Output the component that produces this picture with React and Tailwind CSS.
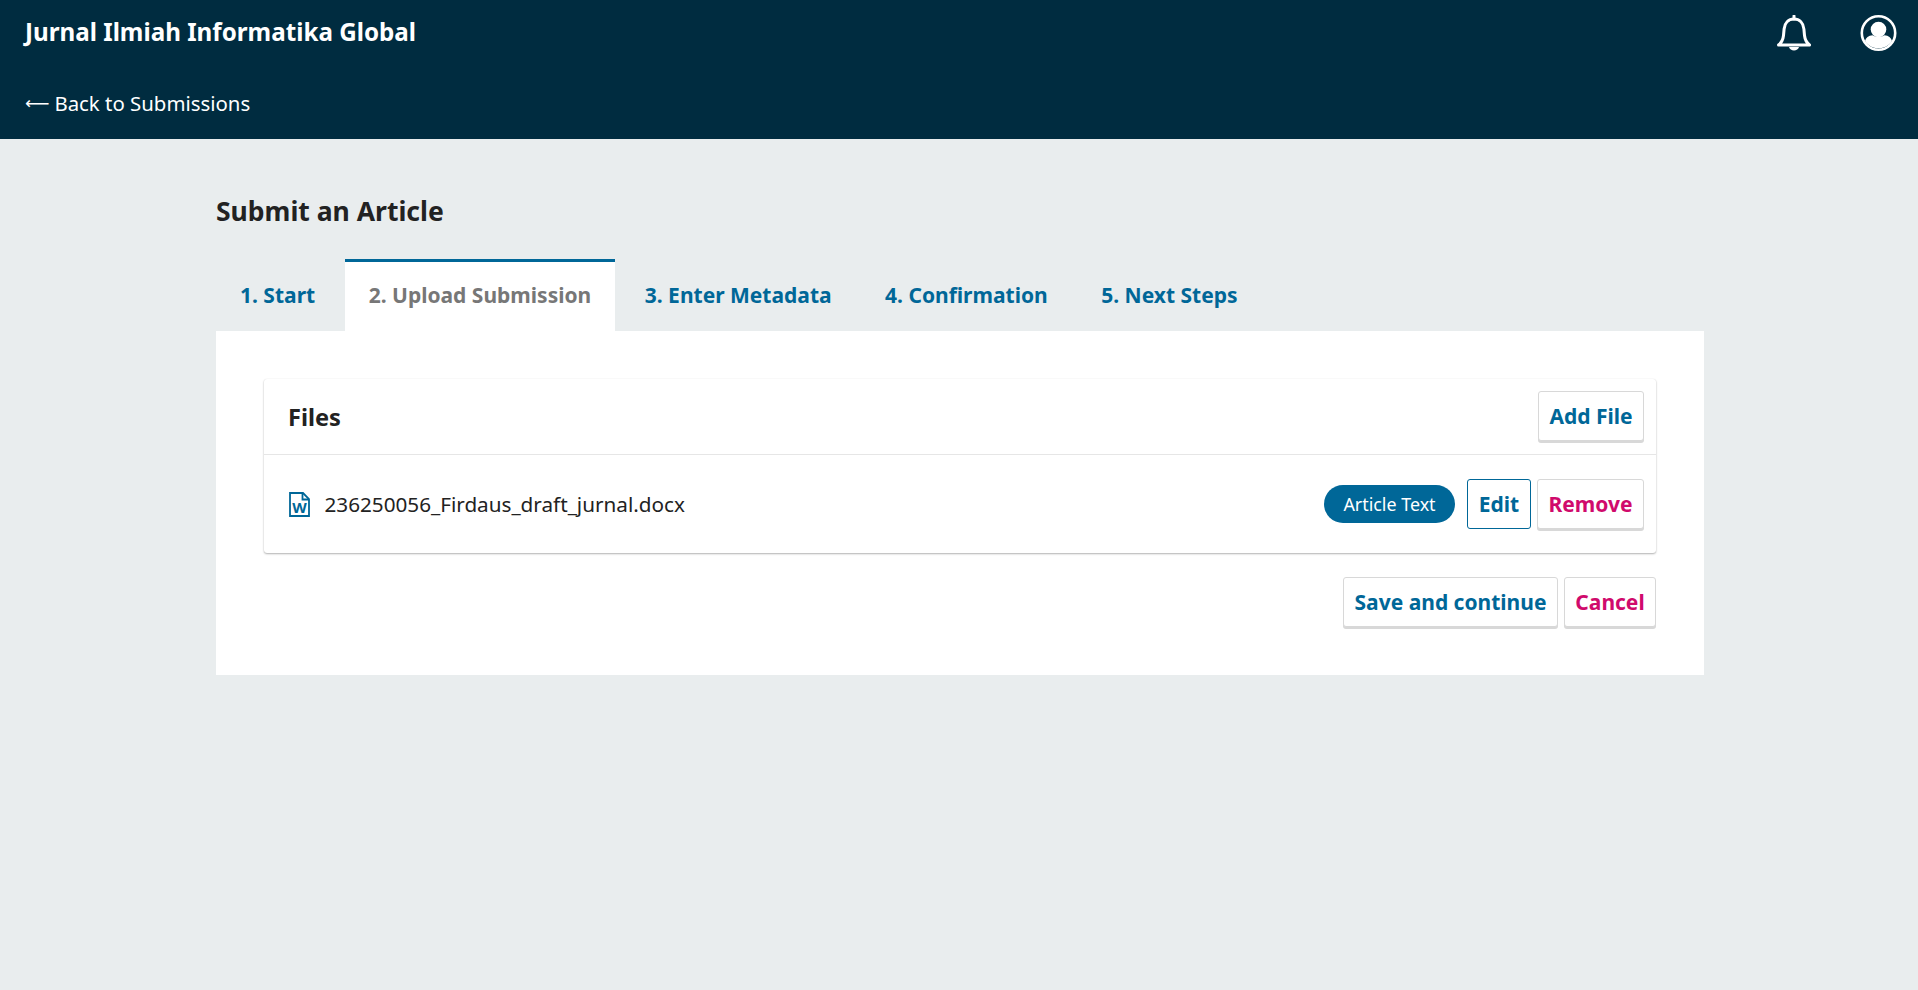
import React from "react";

const tabs = ["1. Start", "2. Upload Submission", "3. Enter Metadata", "4. Confirmation", "5. Next Steps"];

function Bell() {
  return (
    <svg width="34" height="36" viewBox="0 0 34 36" fill="none" stroke="#fff" strokeWidth="3" strokeLinejoin="round" strokeLinecap="round">
      <path d="M17 1v3" />
      <path d="M1.500 30c2.500-2 4.500-5 5-9.500l.6-6.500C7.600 8 11.500 4 17 4s9.400 4 9.900 10l.6 6.500c.5 4.500 2.500 7.500 5 9.500z" />
      <path d="M12 32c.6 2.300 2.600 3.500 5 3.500s4.400-1.200 5-3.500z" fill="#fff" stroke="none" />
    </svg>
  );
}

function UserCircle() {
  return (
    <svg width="37" height="36" viewBox="0 0 37 36">
      <circle cx="18.500" cy="18" r="16.700" fill="none" stroke="#fff" strokeWidth="2.600" />
      <circle cx="18.500" cy="14.500" r="7.800" fill="#fff" />
      <path d="M5 26c.8-3.500 3.500-5.400 7.500-5.800 3.800 2.200 8.200 2.200 12 0 4 .4 6.700 2.300 7.500 5.800-2.800 4.600-7.500 7.300-13.500 7.300S7.800 30.600 5 26z" fill="#fff" />
    </svg>
  );
}

function WordFile() {
  return (
    <svg width="21" height="25" viewBox="0 0 21 25" fill="none">
      <path d="M1 1h13l6 6v17H1z" stroke="#006798" strokeWidth="1.800" />
      <path d="M13.500 1v6.500H20" stroke="#006798" strokeWidth="1.800" />
      <text x="10.500" y="21" textAnchor="middle" fill="#006798" fontSize="15" fontWeight="700" fontFamily="'Noto Sans', sans-serif">W</text>
    </svg>
  );
}

function Btn({ children, danger, outlined, className = "" }) {
  return (
    <button
      className={`inline-flex h-[50px] items-center justify-center rounded-[3px] bg-white pt-[2px] text-[21px] font-bold ${
        outlined ? "border border-[#006798]" : "border border-[#d8d8d8] shadow-[0_2px_0_#d8d8d8]"
      } ${danger ? "text-[#d00a6c]" : "text-[#006798]"} ${className}`}
    >
      {children}
    </button>
  );
}

export default function App() {
  return (
    <div className="min-h-[990px] bg-[#e9edee] font-['Noto_Sans',sans-serif] text-[#222]">
      <header className="h-[139px] bg-[#002c40] pr-[21px] pl-[25px] text-white">
        <div className="flex items-start justify-between">
          <div className="pt-[17px] text-[24.200px] leading-[30px] font-bold">Jurnal Ilmiah Informatika Global</div>
          <div className="flex items-start gap-[49px] pt-[15px]">
            <Bell />
            <UserCircle />
          </div>
        </div>
        <div className="mt-[38px] flex items-center text-[20.400px] leading-[28px]">
          <span className="mr-[5px] font-['DejaVu_Sans',sans-serif] text-[17px]">⟵</span>
          Back to Submissions
        </div>
      </header>

      <main className="w-[1704px] pl-[216px]">
        <h1 className="pt-[55px] text-[26.500px] leading-[34px] font-bold">Submit an Article</h1>

        <nav className="mt-[31px] flex h-[72px] items-stretch gap-[5.500px]">
          {tabs.map((t, i) => (
            <div
              key={t}
              className={
                i === 1
                  ? "flex items-center border-t-[3px] border-[#006798] bg-white px-[24px] pb-[2px] text-[21px] font-bold text-[#777]"
                  : "flex items-center px-[24px] pt-[1px] text-[21px] font-bold text-[#006798]"
              }
            >
              {t}
            </div>
          ))}
        </nav>

        <section className="bg-white px-[48px] pt-[48px] pb-[48px]">
          <div className="rounded-[3px] bg-white shadow-[0_1px_2px_rgba(0,0,0,0.3),0_0_1px_rgba(0,0,0,0.1)]">
            <div className="flex h-[76px] items-start justify-between border-b border-[#e6e6e6] pt-[12px] pr-[12px] pl-[24px]">
              <h2 className="pt-[9px] text-[23.600px] leading-[34px] font-bold">Files</h2>
              <Btn className="w-[106px]">Add File</Btn>
            </div>
            <div className="flex h-[98px] items-center pr-[12px] pl-[25px]">
              <WordFile />
              <span className="ml-[14.500px] pt-[1px] text-[20.700px]">236250056_Firdaus_draft_jurnal.docx</span>
              <span className="ml-auto flex h-[38px] w-[131px] items-center justify-center rounded-full bg-[#006798] text-[17.900px] text-white">
                Article Text
              </span>
              <Btn outlined className="ml-[12px] w-[64px]">Edit</Btn>
              <Btn danger className="ml-[6px] w-[107px]">Remove</Btn>
            </div>
          </div>
          <div className="mt-[24px] flex justify-end gap-[6px]">
            <Btn className="w-[215px]">Save and continue</Btn>
            <Btn danger className="w-[92px]">Cancel</Btn>
          </div>
        </section>
      </main>
    </div>
  );
}
